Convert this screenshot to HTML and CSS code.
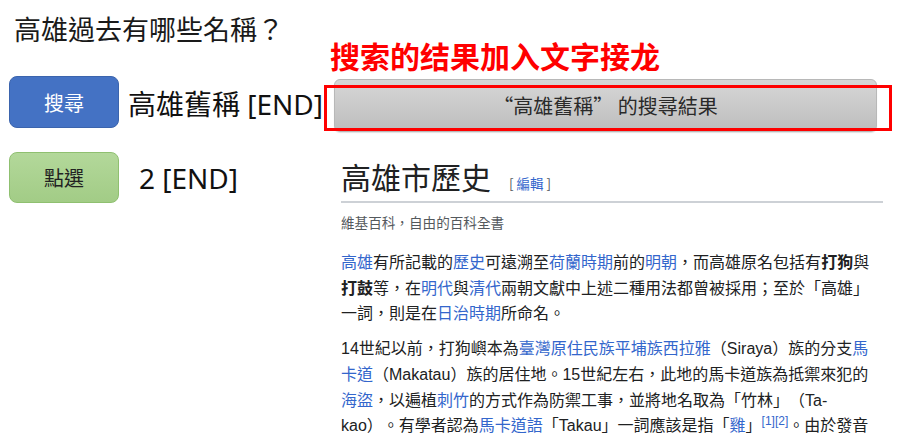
FILE: index.html
```html
<!DOCTYPE html>
<html lang="zh-Hant">
<head>
<meta charset="utf-8">
<title>高雄過去有哪些名稱</title>
<link rel="stylesheet" href="styles.css">
</head>
<body>
<div class="page">
  <p class="question">高雄過去有哪些名稱？</p>
  <p class="annotation-label" lang="zh-Hans">搜索的结果加入文字接龙</p>
  <div class="row row-search">
    <div class="action">
      <div class="btn btn-blue">搜尋</div>
      <span class="output">高雄舊稱 [END]</span>
    </div>
    <div class="result-wrap">
      <div class="result-bar">“高雄舊稱” 的搜尋結果</div>
      <div class="highlight"></div>
    </div>
  </div>
  <div class="row row-click">
    <div class="action">
      <div class="btn btn-green">點選</div>
      <span class="output output-num">2 [END]</span>
    </div>
    <article class="wiki">
      <h1 class="wiki-title">高雄市歷史<span class="edit">[ <a>編輯</a> ]</span></h1>
      <div class="tagline">維基百科，自由的百科全書</div>
      <p class="wiki-p"><a>高雄</a>有所記載的<a>歷史</a>可遠溯至<a>荷蘭時期</a>前的<a>明朝</a>，而高雄原名包括有<b>打狗</b>與<b>打鼓</b>等，在<a>明代</a>與<a>清代</a>兩朝文獻中上述二種用法都曾被採用；至於「高雄」一詞，則是在<a>日治時期</a>所命名。</p>
      <p class="wiki-p">14世紀以前，打狗嶼本為<a>臺灣原住民族平埔族西拉雅</a>（Siraya）族的分支<a>馬卡道</a>（Makatau）族的居住地。15世紀左右，此地的馬卡道族為抵禦來犯的<a>海盜</a>，以遍植<a>刺竹</a>的方式作為防禦工事，並將地名取為「竹林」（Ta-kao）。有學者認為<a>馬卡道語</a>「Takau」一詞應該是指「<a>雞</a>」<sup><a>[1]</a><a>[2]</a></sup>。由於發音近似閩南語的「打狗」，故漢人以此稱之。</p>
    </article>
  </div>
</div>
</body>
</html>
```

FILE: styles.css
```css
html, body {
  margin: 0;
  padding: 0;
  background: #ffffff;
  overflow: hidden;
}

body {
  font-family: "Noto Sans", "Noto Sans CJK TC", sans-serif;
  color: #111111;
  text-spacing-trim: space-all;
}

.page {
  width: 901px;
  height: 433px;
  overflow: hidden;
}

.question {
  margin: 0;
  padding: 17px 0 0 14px;
  font-family: "Noto Sans CJK TC", sans-serif;
  font-size: 27px;
  line-height: 24px;
  color: #1a1a1a;
}

.annotation-label {
  margin: 0;
  padding-left: 330px;
  font-family: "Noto Sans CJK SC", sans-serif;
  font-size: 30px;
  line-height: 29px;
  font-weight: 700;
  color: #ff0000;
}

.row {
  display: flex;
  align-items: flex-start;
}

.row-search {
  margin-top: 6px;
  height: 56px;
}

.row-click {
  margin-top: 20px;
}

.action {
  width: 325px;
  flex-shrink: 0;
  display: flex;
  align-items: center;
  padding-left: 9px;
  box-sizing: border-box;
}

.btn {
  width: 110px;
  height: 52px;
  border-radius: 8px;
  box-sizing: border-box;
  display: flex;
  align-items: center;
  justify-content: center;
  font-family: "Noto Sans CJK TC", sans-serif;
  font-size: 20px;
  flex-shrink: 0;
}

.btn-blue {
  background: #4472c4;
  border: 1px solid #3b64ad;
  color: #ffffff;
}

.btn-green {
  height: 51px;
  background: linear-gradient(#b3d89a, #a2cc86);
  border: 1px solid #8fc070;
  color: #222222;
}

.output {
  margin-left: 9px;
  font-size: 28px;
  line-height: 34px;
  color: #111111;
  white-space: nowrap;
  position: relative;
  top: 2px;
}

.output-num {
  margin-left: 20px;
  top: 0;
}

.result-wrap {
  position: relative;
  margin-left: 9px;
  margin-top: 3px;
  width: 543px;
}

.result-bar {
  height: 53px;
  border-radius: 6px;
  box-sizing: border-box;
  border: 1px solid #b8b8b8;
  background: linear-gradient(#d7d7d7, #bdbdbd);
  box-shadow: 0 1px 1px rgba(0, 0, 0, 0.12);
  display: flex;
  align-items: center;
  justify-content: center;
  font-family: "Noto Sans CJK TC", sans-serif;
  font-size: 20px;
  color: #2a2a2a;
}

.highlight {
  position: absolute;
  left: -10px;
  top: 6px;
  right: -15px;
  bottom: 1px;
  border: 3px solid #ff0000;
}

.wiki {
  margin-left: 16px;
  width: 542px;
  padding-top: 6px;
  font-family: "Liberation Sans", "Noto Sans CJK TC", sans-serif;
  color: #202122;
}

.wiki a {
  color: #3366cc;
  text-decoration: none;
}

.wiki-title {
  margin: 0;
  padding-bottom: 0;
  border-bottom: 2px solid #cdd1d6;
  font-family: "Noto Sans CJK TC", sans-serif;
  font-size: 30px;
  line-height: 36px;
  font-weight: 400;
  color: #202122;
}

.edit {
  margin-left: 18px;
  font-size: 13.5px;
  color: #54595d;
}

.tagline {
  margin-top: 9px;
  font-family: "Noto Sans CJK TC", sans-serif;
  font-size: 13.6px;
  line-height: 20px;
  color: #54595d;
}

.wiki-p {
  margin: 0 0 9.6px;
  font-size: 16px;
  line-height: 25.6px;
}

.tagline + .wiki-p {
  margin-top: 18px;
}

.wiki-p b {
  font-weight: 700;
}

.wiki sup {
  font-size: 12px;
  line-height: 0;
  vertical-align: 6px;
}
```
